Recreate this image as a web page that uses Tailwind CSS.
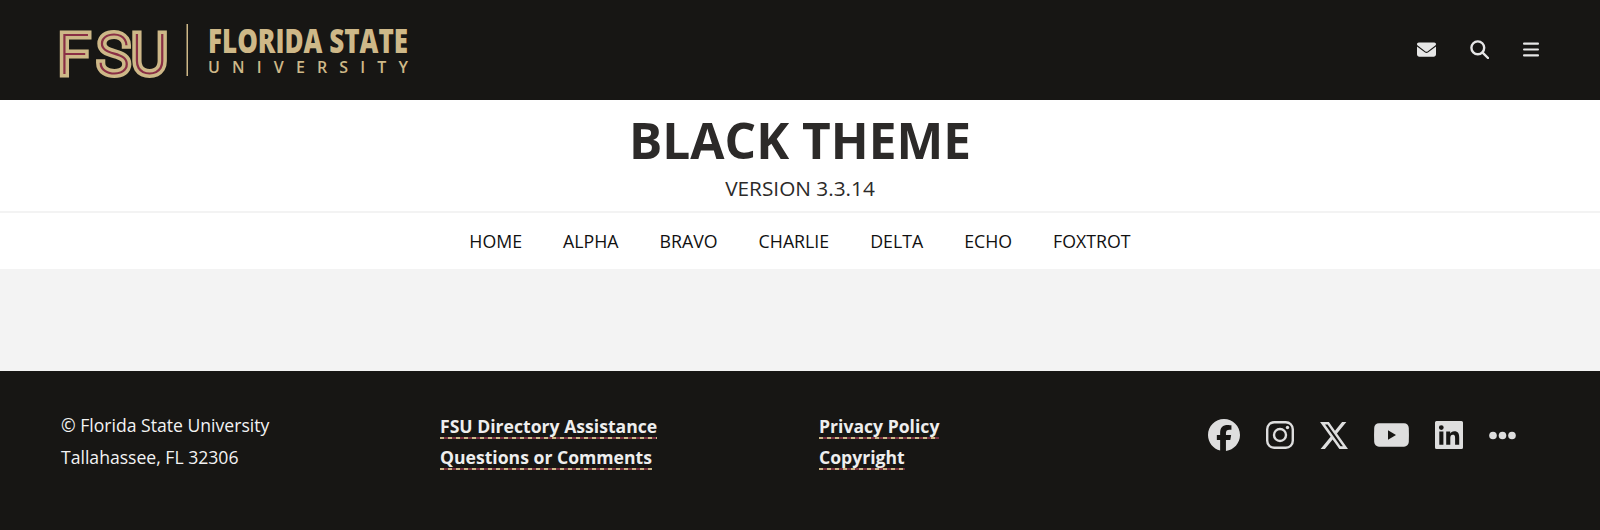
<!DOCTYPE html>
<html lang="en">
<head>
    <meta charset="UTF-8">
    <meta name="viewport" content="width=device-width, initial-scale=1.0">
    <script src="https://cdn.jsdelivr.net/npm/@tailwindcss/browser@4"></script>
    <title>Black Theme</title>
</head>

<body class="bg-[#f3f3f3] font-['Open_Sans',sans-serif] overflow-hidden">

    <!-- top bar -->
    <header class="h-[100px] bg-[#171614] flex items-center justify-between pl-[55px] pr-[61px]">
        <a href="#" class="block">
            <svg width="440" height="84" viewBox="0 0 440 84" class="block">
                <text x="3 42 76" y="66" font-size="56" font-weight="200" fill="#8a2f45" stroke="#ceb888" stroke-width="7" class="font-['Roboto',sans-serif] [paint-order:stroke]">FSU</text>
                <rect x="131.500" y="16" width="1.500" height="52" fill="#ceb888"/>
                <text x="153" y="45" font-size="34" font-weight="800" fill="#ceb888" textLength="200" lengthAdjust="spacingAndGlyphs" class="font-['Open_Sans',sans-serif]">FLORIDA STATE</text>
                <text x="153" y="65" font-size="16" font-weight="600" fill="#ceb888" textLength="200" class="font-['Open_Sans',sans-serif]">UNIVERSITY</text>
            </svg>
        </a>
        <div class="flex items-center gap-[34px] text-[#e6e6e6] mb-[2px]">
            <svg width="19" height="19" viewBox="0 0 512 512" fill="currentColor"><path d="M48 64C21.500 64 0 85.500 0 112c0 15.100 7.100 29.300 19.200 38.400L236.800 313.600c11.400 8.500 27 8.500 38.400 0L492.800 150.400c12.100-9.100 19.200-23.300 19.200-38.400c0-26.500-21.500-48-48-48H48zM0 176V384c0 35.300 28.700 64 64 64H448c35.300 0 64-28.700 64-64V176L294.400 339.200c-22.800 17.100-54 17.100-76.800 0L0 176z"/></svg>
            <svg width="19" height="19" viewBox="0 0 19 19" fill="none" stroke="currentColor" stroke-width="2.400"><circle cx="7.800" cy="7.800" r="6.400"/><path d="M12.600 12.600L18 18" stroke-linecap="round"/></svg>
            <svg width="16" height="15" viewBox="0 0 16 15" fill="currentColor"><rect y="0.500" width="16" height="2.200" rx="1"/><rect y="6.400" width="16" height="2.200" rx="1"/><rect y="12.300" width="16" height="2.200" rx="1"/></svg>
        </div>
    </header>

    <!-- site title -->
    <div class="h-[111px] bg-white text-center pt-[10px]">
        <h1 class="text-[49.600px] leading-[60px] font-bold text-[#2c2a29]">BLACK THEME</h1>
        <p class="text-[20.800px] leading-[28px] mt-[4px] text-[#2c2a29]">VERSION 3.3.14</p>
    </div>

    <!-- main nav -->
    <nav class="h-[58px] bg-white border-t-2 border-[#f3f3f3] flex items-center justify-center gap-[41px] text-[17.760px] text-[#111111]">
        <a href="#">HOME</a>
        <a href="#">ALPHA</a>
        <a href="#">BRAVO</a>
        <a href="#">CHARLIE</a>
        <a href="#">DELTA</a>
        <a href="#">ECHO</a>
        <a href="#">FOXTROT</a>
    </nav>

    <main class="h-[102px] bg-[#f3f3f3]"></main>

    <!-- footer -->
    <footer class="h-[159px] bg-[#171614] pl-[61px] pt-[39px] grid grid-cols-[379px_379px_379px_1fr] text-[17.600px] leading-[31.500px] text-[#f3f3f3]">
        <div>
            <p>© Florida State University</p>
            <p>Tallahassee, FL 32306</p>
        </div>
        <div class="flex flex-col items-start font-bold text-[#eeeeee] pt-[3px]">
            <a href="#" class="bg-[repeating-linear-gradient(90deg,#ceb888_0,#ceb888_4px,#782f40_4px,#782f40_8px)] bg-bottom bg-no-repeat bg-[length:100%_2px] leading-[26px] mb-[5px]">FSU Directory Assistance</a>
            <a href="#" class="bg-[repeating-linear-gradient(90deg,#ceb888_0,#ceb888_4px,#782f40_4px,#782f40_8px)] bg-bottom bg-no-repeat bg-[length:100%_2px] leading-[26px]">Questions or Comments</a>
        </div>
        <div class="flex flex-col items-start font-bold text-[#eeeeee] pt-[3px]">
            <a href="#" class="bg-[repeating-linear-gradient(90deg,#ceb888_0,#ceb888_4px,#782f40_4px,#782f40_8px)] bg-bottom bg-no-repeat bg-[length:100%_2px] leading-[26px] mb-[5px]">Privacy Policy</a>
            <a href="#" class="bg-[repeating-linear-gradient(90deg,#ceb888_0,#ceb888_4px,#782f40_4px,#782f40_8px)] bg-bottom bg-no-repeat bg-[length:100%_2px] leading-[26px]">Copyright</a>
        </div>
        <div class="flex items-center gap-[26px] h-[32px] mt-[9px] ml-[10px] text-[#dedede]">
            <svg width="32" height="32" viewBox="0 0 512 512" fill="currentColor"><path d="M512 256C512 114.600 397.400 0 256 0S0 114.600 0 256C0 376 82.700 476.800 194.200 504.500V334.200H141.400V256h52.800V222.300c0-87.100 39.400-127.500 125-127.500c16.200 0 44.200 3.200 55.700 6.400V172c-6-.6-16.500-1-29.600-1c-42 0-58.200 15.900-58.200 57.200V256h83.600l-14.400 78.200H287V510.100C413.800 494.800 512 386.900 512 256z"/></svg>
            <svg width="28" height="28" viewBox="0 0 28 28" fill="none" stroke="currentColor" stroke-width="2.400"><rect x="1.200" y="1.200" width="25.600" height="25.600" rx="7"/><circle cx="14" cy="14" r="6"/><circle cx="21.500" cy="6.500" r="1.700" fill="currentColor" stroke="none"/></svg>
            <svg width="28" height="27" viewBox="26 48 461 416" preserveAspectRatio="none" fill="currentColor"><path d="M389.200 48h70.600L305.600 224.200 487 464H345L233.700 318.600 106.500 464H35.800L200.700 275.500 26.800 48H172.400L272.900 180.900 389.200 48zM364.400 421.800h39.100L151.100 88h-42L364.400 421.800z"/></svg>
            <svg width="35" height="24" viewBox="0 0 35 24" fill="currentColor"><path fill-rule="evenodd" d="M5 0.300h25c2.700 0 4.700 2 4.800 4.700 .2 4.700 .2 9.300 0 14 -.1 2.700-2.100 4.700-4.800 4.700H5c-2.700 0-4.700-2-4.800-4.700 -.2-4.700-.2-9.300 0-14C.3 2.300 2.300 .3 5 .3zM14 7.300v9.400l8-4.700z"/></svg>
            <svg width="28" height="28" viewBox="0 0 28 28" fill="currentColor"><path fill-rule="evenodd" d="M1.500 0h25a1.500 1.500 0 0 1 1.500 1.500v25a1.500 1.500 0 0 1-1.500 1.500H1.500a1.500 1.500 0 0 1-1.500-1.500V1.500a1.500 1.500 0 0 1 1.500-1.500zM4.300 10.500v13.200h4.100V10.500zM6.300 4.200a2.400 2.400 0 1 0 0 4.800 2.400 2.400 0 0 0 0-4.800zM11.200 10.500v13.200h4.100v-6.500c0-1.800.4-3.500 2.600-3.500 2.200 0 2.200 2 2.200 3.600v6.400h4.100v-7.200c0-3.600-.8-6.300-5-6.300-2 0-3.400 1.100-3.900 2.200h-.1v-1.900z"/></svg>
            <svg width="27" height="9" viewBox="0 0 27 9" fill="currentColor"><circle cx="4" cy="4.500" r="3.800"/><circle cx="13.500" cy="4.500" r="3.800"/><circle cx="23" cy="4.500" r="3.800"/></svg>
        </div>
    </footer>

</body>
</html>
